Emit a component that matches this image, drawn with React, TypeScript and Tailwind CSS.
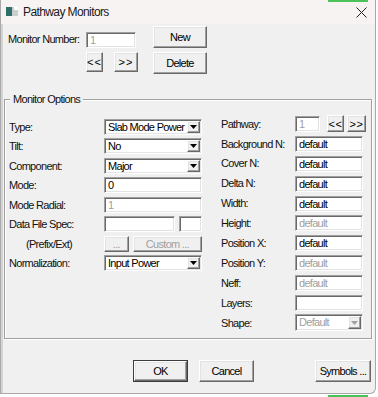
import type { ReactNode } from "react";
import clsx from "clsx";

const sunken =
  "bg-white border border-t-[#a0a0a0] border-l-[#a0a0a0] border-b-white border-r-white shadow-[inset_1px_1px_0_#696969,inset_-1px_-1px_0_#e3e3e3]";
const raised =
  "bg-[#f0f0f0] border border-t-white border-l-white border-b-[#696969] border-r-[#696969] shadow-[inset_-1px_-1px_0_#a0a0a0,inset_1px_1px_0_#e3e3e3]";

const Edit = ({ value = "", w, disabled }: { value?: string; w: string; disabled?: boolean }) => (
  <div
    className={clsx(
      sunken,
      "h-[16px] pl-[3px] leading-[14px] overflow-hidden whitespace-nowrap",
      disabled ? "text-[#a0a0a0]" : "text-black",
      w
    )}
  >
    {value}
  </div>
);

const Combo = ({ value, w, h = "h-[16px]", disabled }: { value: string; w: string; h?: string; disabled?: boolean }) => (
  <div className={clsx(sunken, "flex p-[1px]", w, h)}>
    <span
      className={clsx(
        "flex-1 pl-[2px] leading-[12px] whitespace-nowrap overflow-hidden",
        disabled ? "text-[#a0a0a0]" : "text-black"
      )}
    >
      {value}
    </span>
    <span className={clsx(raised, "w-[13px] h-full flex items-center justify-center")}>
      <svg width="7" height="4" viewBox="0 0 7 4">
        <path d="M0 0h7L3.5 4z" fill={disabled ? "#a0a0a0" : "#000"} />
      </svg>
    </span>
  </div>
);

const Btn = ({
  children,
  w,
  h,
  disabled,
  className,
}: {
  children: ReactNode;
  w: string;
  h: string;
  disabled?: boolean;
  className?: string;
}) => (
  <div
    className={clsx(
      raised,
      "flex items-center justify-center whitespace-nowrap",
      disabled ? "text-[#a0a0a0]" : "text-black",
      w,
      h,
      className
    )}
  >
    {children}
  </div>
);

const LeftRow = ({ label, children, indent }: { label: string; children: ReactNode; indent?: boolean }) => (
  <div className="h-[19.5px] flex items-center">
    <span className={clsx("w-[95px] shrink-0", indent && "pl-[17px]")}>{label}</span>
    {children}
  </div>
);

const RightRow = ({ label, children }: { label: string; children: ReactNode }) => (
  <div className="h-[19.9px] flex items-center">
    <span className="w-[74px] shrink-0">{label}</span>
    {children}
  </div>
);

export default function App() {
  return (
    <div className="relative w-[378px] h-[397px] bg-white overflow-hidden font-['Liberation_Sans',Arial,sans-serif] text-[11px] tracking-[-0.7px] text-[#111]">
      <div className="w-[376px] h-[394px] flex flex-col bg-[#f0f0f0] border border-t-0 border-[#a9a9a9] rounded-br-[6px] overflow-hidden shadow-[inset_2px_0_0_#d4d4d4]">
        {/* title bar */}
        <div className="h-[24px] shrink-0 flex items-center bg-[#f8f3f3]">
          <svg className="ml-[5px]" width="12" height="10" viewBox="0 0 12 10">
            <rect x="0" y="0" width="12" height="9" fill="#c9cfcf" />
            <rect x="0" y="0" width="6" height="9" fill="#2f6f6a" />
            <rect x="8" y="0" width="4" height="3" fill="#ffffff" />
          </svg>
          <span className="ml-[5px] text-[12px] tracking-[-0.6px] text-[#1a1a1a]">Pathway Monitors</span>
          <svg className="ml-auto mr-[8px]" width="11" height="11" viewBox="0 0 11 11">
            <path d="M0.5 0.5l10 10M10.5 0.5l-10 10" stroke="#222" strokeWidth="1" />
          </svg>
        </div>

        {/* monitor number */}
        <div className="flex pt-[2px] pl-[7px]">
          <div className="w-[78px] pt-[7px] leading-[13px]">Monitor Number:</div>
          <div className="flex flex-col pt-[6px]">
            <Edit value="1" w="w-[50px]" disabled />
            <div className="flex mt-[4px] tracking-[1px]">
              <Btn w="w-[17px]" h="h-[20px]">&lt;&lt;</Btn>
              <Btn w="w-[24px]" h="h-[20px]" className="ml-[11px]">&gt;&gt;</Btn>
            </div>
          </div>
          <div className="flex flex-col ml-[15px]">
            <Btn w="w-[54px]" h="h-[22px]">New</Btn>
            <Btn w="w-[54px]" h="h-[22px]" className="mt-[4px]">Delete</Btn>
          </div>
        </div>

        {/* group box */}
        <div className="relative mt-[25px] ml-[3px] w-[368px] h-[240px] border border-[#a0a0a0] shadow-[inset_1px_1px_0_#ffffff,1px_1px_0_#ffffff]">
          <span className="absolute -top-[7px] left-[5px] px-[3px] bg-[#f0f0f0] leading-[13px]">Monitor Options</span>
          <div className="flex pl-[4px]">
            <div className="w-[193px] pt-[17px]">
              <LeftRow label="Type:">
                <Combo value="Slab Mode Power" w="w-[98px]" />
              </LeftRow>
              <LeftRow label="Tilt:">
                <Combo value="No" w="w-[98px]" />
              </LeftRow>
              <LeftRow label="Component:">
                <Combo value="Major" w="w-[98px]" />
              </LeftRow>
              <LeftRow label="Mode:">
                <Edit value="0" w="w-[98px]" />
              </LeftRow>
              <LeftRow label="Mode Radial:">
                <Edit value="1" w="w-[98px]" disabled />
              </LeftRow>
              <LeftRow label="Data File Spec:">
                <Edit w="w-[71px]" />
                <div className="ml-[4px]">
                  <Edit w="w-[23px]" />
                </div>
              </LeftRow>
              <LeftRow label="(Prefix/Ext)" indent>
                <Btn w="w-[25px]" h="h-[16px]" disabled>...</Btn>
                <Btn w="w-[70px]" h="h-[16px]" className="ml-[4px]" disabled>Custom ...</Btn>
              </LeftRow>
              <LeftRow label="Normalization:">
                <Combo value="Input Power" w="w-[99px]" />
              </LeftRow>
            </div>
            <div className="ml-[19px] pt-[14px]">
              <RightRow label="Pathway:">
                <Edit value="1" w="w-[25px]" disabled />
                <Btn w="w-[17px]" h="h-[17px]" className="ml-[7px] tracking-[0.5px]">&lt;&lt;</Btn>
                <Btn w="w-[19px]" h="h-[17px]" className="ml-[3px] tracking-[0.5px]">&gt;&gt;</Btn>
              </RightRow>
              <RightRow label="Background N:">
                <Edit value="default" w="w-[68px]" />
              </RightRow>
              <RightRow label="Cover N:">
                <Edit value="default" w="w-[68px]" />
              </RightRow>
              <RightRow label="Delta N:">
                <Edit value="default" w="w-[68px]" />
              </RightRow>
              <RightRow label="Width:">
                <Edit value="default" w="w-[68px]" />
              </RightRow>
              <RightRow label="Height:">
                <Edit value="default" w="w-[68px]" disabled />
              </RightRow>
              <RightRow label="Position X:">
                <Edit value="default" w="w-[68px]" />
              </RightRow>
              <RightRow label="Position Y:">
                <Edit value="default" w="w-[68px]" disabled />
              </RightRow>
              <RightRow label="Neff:">
                <Edit value="default" w="w-[68px]" disabled />
              </RightRow>
              <RightRow label="Layers:">
                <Edit w="w-[68px]" />
              </RightRow>
              <RightRow label="Shape:">
                <Combo value="Default" w="w-[68px]" h="h-[17px]" disabled />
              </RightRow>
            </div>
          </div>
        </div>

        {/* bottom buttons */}
        <div className="flex mt-[21px]">
          <div className="ml-[132px] border border-[#3c3c3c]">
            <Btn w="w-[53px]" h="h-[20px]">OK</Btn>
          </div>
          <Btn w="w-[55px]" h="h-[22px]" className="ml-[11px]">Cancel</Btn>
          <Btn w="w-[56px]" h="h-[22px]" className="ml-[61px]">Symbols ...</Btn>
        </div>
      </div>

      {/* bits of a window behind */}
      <div className="absolute top-0 left-[328px] w-[40px] h-[2px] bg-[#4cc35a]" />
      <div className="absolute bottom-0 left-[328px] w-[40px] h-[2px] bg-[#4cc35a]" />
    </div>
  );
}
